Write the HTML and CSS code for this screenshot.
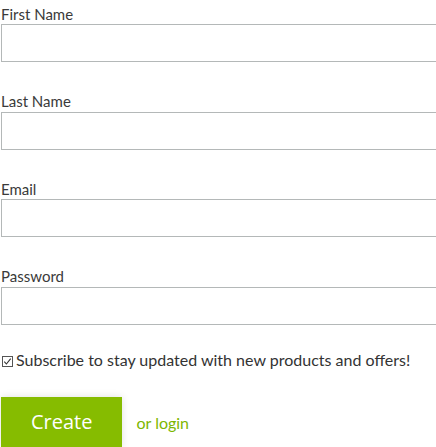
FILE: index.html
```html
<!DOCTYPE html>
<html>
<head>
<meta charset="utf-8">
<link rel="stylesheet" href="styles.css">
</head>
<body>
<form class="form">
  <div class="field">
    <label class="label">First Name</label>
    <input class="input" type="text">
  </div>
  <div class="field">
    <label class="label">Last Name</label>
    <input class="input" type="text">
  </div>
  <div class="field">
    <label class="label">Email</label>
    <input class="input" type="email">
  </div>
  <div class="field field-last">
    <label class="label">Password</label>
    <input class="input" type="password">
  </div>
  <div class="check-row">
    <svg class="check" width="11" height="11" viewBox="0 0 11 11">
      <rect x="0.5" y="0.5" width="10" height="10" fill="#fff" stroke="#555" stroke-width="1"/>
      <polyline points="2.3,5.6 4.4,8 8.7,2.6" fill="none" stroke="#333" stroke-width="1.1"/>
    </svg>
    <span class="check-text">Subscribe to stay updated with new products and offers!</span>
  </div>
  <div class="actions">
    <button class="btn" type="button">Create</button>
    <a class="login" href="#">or login</a>
  </div>
</form>
</body>
</html>
```
FILE: styles.css
```css
html, body {
  margin: 0;
  padding: 0;
  background: #fff;
  overflow: hidden;
}
body {
  padding-left: 1px;
  font-family: Lato, "Liberation Sans", sans-serif;
  color: #3a3a3a;
}
.form {
  display: flex;
  flex-direction: column;
}
.field {
  display: flex;
  flex-direction: column;
}
.label {
  display: block;
  font-size: 15px;
  line-height: 20px;
  padding-top: 3.5px;
  height: 20.5px;
  color: #3a3a3a;
}
.input {
  display: block;
  box-sizing: border-box;
  width: 100%;
  height: 38px;
  margin: 0 0 25.67px 0;
  border: 1px solid #b4b8b8;
  border-right: none;
  background: #fff;
  outline: none;
}
.field-last .input {
  margin-bottom: 24.8px;
}
.check-row {
  display: flex;
  align-items: flex-start;
  height: 20px;
  margin-bottom: 27.2px;
  font-size: 16px;
  line-height: 20px;
}
.check {
  margin: 6px 3px 0 1px;
  flex: none;
}
.check-text {
  color: #333;
}
.actions {
  display: flex;
  align-items: baseline;
}
.btn {
  font-family: "Open Sans", "Liberation Sans", sans-serif;
  font-size: 20px;
  line-height: 30px;
  padding: 10px 30px;
  border: none;
  border-radius: 0;
  background: #86bc00;
  color: #fff;
  box-shadow: 0 0 8px rgba(0, 0, 0, 0.12);
  cursor: pointer;
}
.login {
  margin-left: 14px;
  font-size: 16px;
  color: #7db600;
  text-decoration: none;
}
```
